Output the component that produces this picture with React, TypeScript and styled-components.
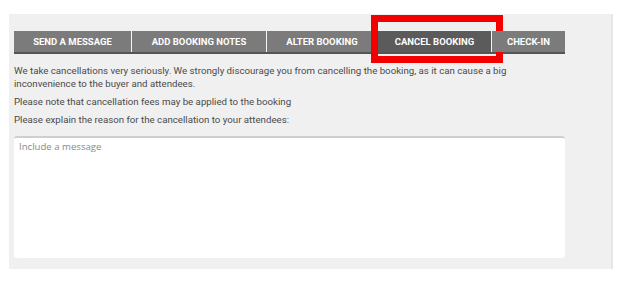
import React from "react";
import styled, { createGlobalStyle } from "styled-components";

const Global = createGlobalStyle`
  html, body { margin: 0; padding: 0; background: #ffffff; }
  body { font-family: Roboto, "Liberation Sans", Arial, sans-serif; }
`;

const Page = styled.div`
  padding: 14px 0 0 9px;
`;

const Panel = styled.div`
  width: 604px;
  height: 255px;
  box-sizing: border-box;
  background: #f0f0f0;
  border-right: 2px solid #e6e6e6;
  padding: 17px 46px 0 5px;
  display: flex;
  flex-direction: column;
  overflow: hidden;
`;

const TabBar = styled.div`
  display: flex;
  border-bottom: 2px solid #555555;
  width: 551px;
`;

const Tab = styled.div<{ $active?: boolean; $width?: number }>`
  position: relative;
  box-sizing: border-box;
  height: 21px;
  display: flex;
  align-items: center;
  justify-content: center;
  width: ${(p) => (p.$width ? `${p.$width}px` : "auto")};
  flex: ${(p) => (p.$width ? "0 0 auto" : "1 1 auto")};
  background: ${(p) => (p.$active ? "#5b5b5b" : "#7b7b7b")};
  color: #ffffff;
  font-family: Roboto, "Liberation Sans", Arial, sans-serif;
  font-weight: 700;
  font-size: 9.5px;
  text-transform: uppercase;
  white-space: nowrap;
  & + & {
    border-left: 1px solid #f4f4f4;
  }
`;

const Highlight = styled.div`
  position: absolute;
  left: -7px;
  top: -16px;
  right: -12px;
  bottom: -11px;
  border: 7px solid #f20000;
  pointer-events: none;
`;

const Body = styled.div`
  width: 551px;
  margin-top: 10px;
  color: #4a4a4a;
  font-family: Roboto, "Liberation Sans", Arial, sans-serif;
  font-size: 9.7px;
  line-height: 13px;
`;

const Para = styled.p`
  margin: 0 0 5px 0;
`;

const Message = styled.textarea`
  display: block;
  box-sizing: border-box;
  width: 551px;
  height: 122px;
  margin-top: 5px;
  border: none;
  border-top: 2px solid #cfcfcf;
  border-radius: 3px;
  background: #ffffff;
  resize: none;
  padding: 2px 5px;
  font-family: "Open Sans", "Liberation Sans", Arial, sans-serif;
  font-size: 9.6px;
  color: #444;
  outline: none;
  &::placeholder {
    color: #8a8a8a;
  }
`;

export default function App() {
  return (
    <>
      <Global />
      <Page>
        <Panel>
          <TabBar>
            <Tab $width={117}>Send a message</Tab>
            <Tab $width={135}>Add booking notes</Tab>
            <Tab $width={111}>Alter booking</Tab>
            <Tab $width={114} $active>
              Cancel booking
              <Highlight />
            </Tab>
            <Tab>Check-in</Tab>
          </TabBar>
          <Body>
            <Para>
              We take cancellations very seriously. We strongly discourage you from cancelling the booking, as it can cause a big inconvenience to the buyer and attendees.
            </Para>
            <Para>Please note that cancellation fees may be applied to the booking</Para>
            <Para>Please explain the reason for the cancellation to your attendees:</Para>
          </Body>
          <Message placeholder="Include a message" />
        </Panel>
      </Page>
    </>
  );
}
